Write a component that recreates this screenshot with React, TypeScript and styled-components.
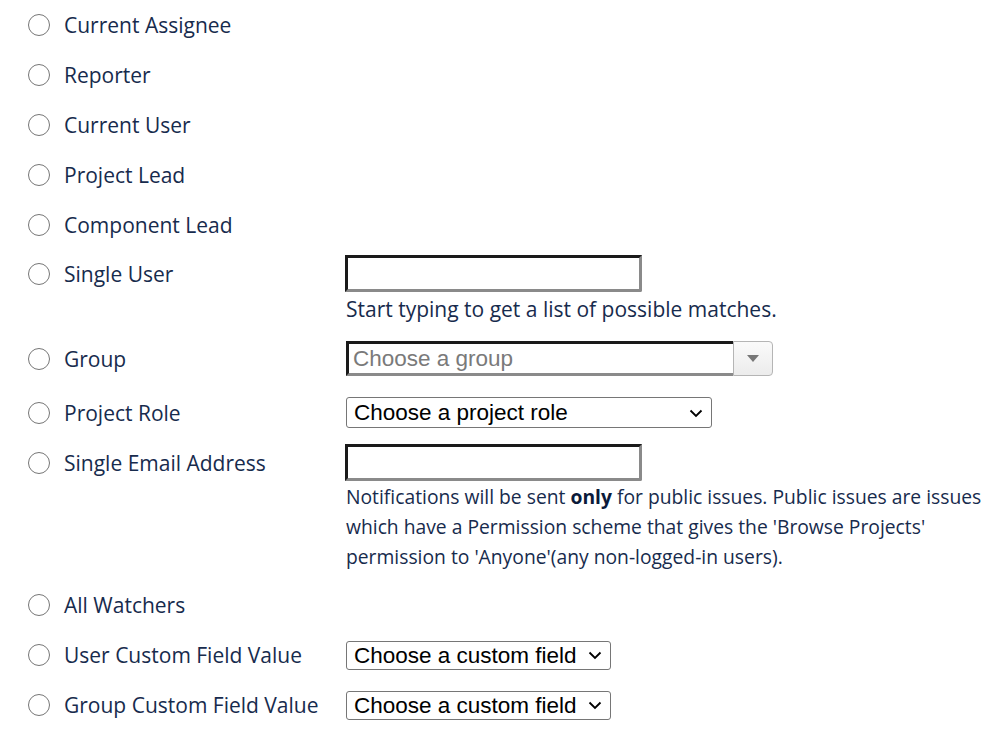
import React from 'react';
import styled, { createGlobalStyle } from 'styled-components';

const GlobalStyle = createGlobalStyle`
  html, body {
    margin: 0;
    padding: 0;
    background: #ffffff;
  }
  body {
    font-family: 'Open Sans', 'Noto Sans', sans-serif;
    color: #172b4d;
  }
`;

const Form = styled.form`
  display: flex;
  flex-direction: column;
  padding-left: 28px;
`;

const Row = styled.div<{ $top?: number; $bottom?: number }>`
  display: grid;
  grid-template-columns: 318px 1fr;
  align-items: center;
  padding-top: ${(p) => (p.$top ?? 10)}px;
  padding-bottom: ${(p) => (p.$bottom ?? 10)}px;
`;

const Option = styled.label`
  display: flex;
  align-items: center;
  gap: 14px;
  font-size: 21px;
  line-height: 30px;
  color: #172b4d;
  white-space: nowrap;
`;

const Radio = styled.input.attrs({ type: 'radio' })`
  appearance: none;
  margin: 0;
  width: 22px;
  height: 22px;
  border: 1px solid #767676;
  border-radius: 50%;
  background: #fff;
  flex: none;
`;

const TextInput = styled.input.attrs({ type: 'text' })`
  box-sizing: border-box;
  width: 297px;
  height: 37px;
  margin-left: -1px;
  border-style: solid;
  border-width: 3px;
  border-color: #1a1a1a #8a8a8a #8a8a8a #1a1a1a;
  border-radius: 0 0 2px 0;
  background: #fff;
  outline: none;
`;

const Help = styled.div<{ $size: number }>`
  font-size: ${(p) => p.$size}px;
  line-height: 30px;
  color: #172b4d;
  white-space: nowrap;

  strong {
    font-weight: 700;
    color: #0b1a3a;
  }
`;

const SelectWrap = styled.div<{ $width: number; $height: number }>`
  position: relative;
  width: ${(p) => p.$width}px;
  height: ${(p) => p.$height}px;
`;

const NativeSelect = styled.select`
  appearance: none;
  box-sizing: border-box;
  width: 100%;
  height: 100%;
  margin: 0;
  padding: 0 30px 0 7px;
  border: 1px solid #767676;
  border-radius: 3px;
  background: #fff;
  color: #000;
  font-family: 'Liberation Sans', Arial, sans-serif;
  font-size: 22.5px;
  outline: none;
`;

const Chevron = styled.svg`
  position: absolute;
  right: 9px;
  top: 50%;
  width: 14px;
  height: 9px;
  margin-top: -4px;
  pointer-events: none;
`;

const Combo = styled.div`
  display: flex;
  width: 427px;
  height: 35px;
`;

const ComboInput = styled.input.attrs({ type: 'text' })`
  box-sizing: border-box;
  flex: 1;
  min-width: 0;
  height: 100%;
  padding: 0 4px;
  border-style: solid;
  border-width: 3px 0 3px 3px;
  border-color: #1a1a1a transparent #8a8a8a #1a1a1a;
  background: #fff;
  font-family: 'Liberation Sans', Arial, sans-serif;
  font-size: 22.5px;
  color: #000;
  outline: none;

  &::placeholder {
    color: #7a7a7a;
  }
`;

const ComboButton = styled.button`
  box-sizing: border-box;
  width: 40px;
  height: 100%;
  display: flex;
  align-items: center;
  justify-content: center;
  padding: 0;
  border: 1px solid #b5b5b5;
  border-radius: 0 4px 4px 0;
  background: linear-gradient(#fafafa, #ececec);
`;

function Select({ width, height, label }: { width: number; height: number; label: string }) {
  return (
    <SelectWrap $width={width} $height={height}>
      <NativeSelect defaultValue="">
        <option value="">{label}</option>
      </NativeSelect>
      <Chevron viewBox="0 0 14 9">
        <path d="M1.5 1.5 L7 7 L12.5 1.5" fill="none" stroke="#000" strokeWidth="1.8" />
      </Chevron>
    </SelectWrap>
  );
}

function RadioLabel({ children }: { children: React.ReactNode }) {
  return (
    <Option>
      <Radio name="recipient" />
      {children}
    </Option>
  );
}

export default function App() {
  return (
    <>
      <GlobalStyle />
      <Form>
        <Row>
          <RadioLabel>Current Assignee</RadioLabel>
        </Row>
        <Row>
          <RadioLabel>Reporter</RadioLabel>
        </Row>
        <Row>
          <RadioLabel>Current User</RadioLabel>
        </Row>
        <Row>
          <RadioLabel>Project Lead</RadioLabel>
        </Row>
        <Row>
          <RadioLabel>Component Lead</RadioLabel>
        </Row>
        <Row $top={5} $bottom={0}>
          <RadioLabel>Single User</RadioLabel>
          <TextInput />
        </Row>
        <Row $top={2} $bottom={0}>
          <span />
          <Help $size={21}>Start typing to get a list of possible matches.</Help>
        </Row>
        <Row $top={17} $bottom={10}>
          <RadioLabel>Group</RadioLabel>
          <Combo>
            <ComboInput placeholder="Choose a group" />
            <ComboButton type="button">
              <svg width="12" height="7" viewBox="0 0 12 7">
                <path d="M0 0 H12 L6 7 Z" fill="#777" />
              </svg>
            </ComboButton>
          </Combo>
        </Row>
        <Row $top={11} $bottom={10}>
          <RadioLabel>Project Role</RadioLabel>
          <Select width={366} height={31} label="Choose a project role" />
        </Row>
        <Row $top={6} $bottom={0}>
          <RadioLabel>Single Email Address</RadioLabel>
          <TextInput />
        </Row>
        <Row $top={1} $bottom={8}>
          <span />
          <Help $size={19.3}>
            Notifications will be sent <strong>only</strong> for public issues. Public issues are issues
            <br />
            which have a Permission scheme that gives the 'Browse Projects'
            <br />
            permission to 'Anyone'(any non-logged-in users).
          </Help>
        </Row>
        <Row>
          <RadioLabel>All Watchers</RadioLabel>
        </Row>
        <Row>
          <RadioLabel>User Custom Field Value</RadioLabel>
          <Select width={265} height={29} label="Choose a custom field" />
        </Row>
        <Row>
          <RadioLabel>Group Custom Field Value</RadioLabel>
          <Select width={265} height={29} label="Choose a custom field" />
        </Row>
      </Form>
    </>
  );
}
